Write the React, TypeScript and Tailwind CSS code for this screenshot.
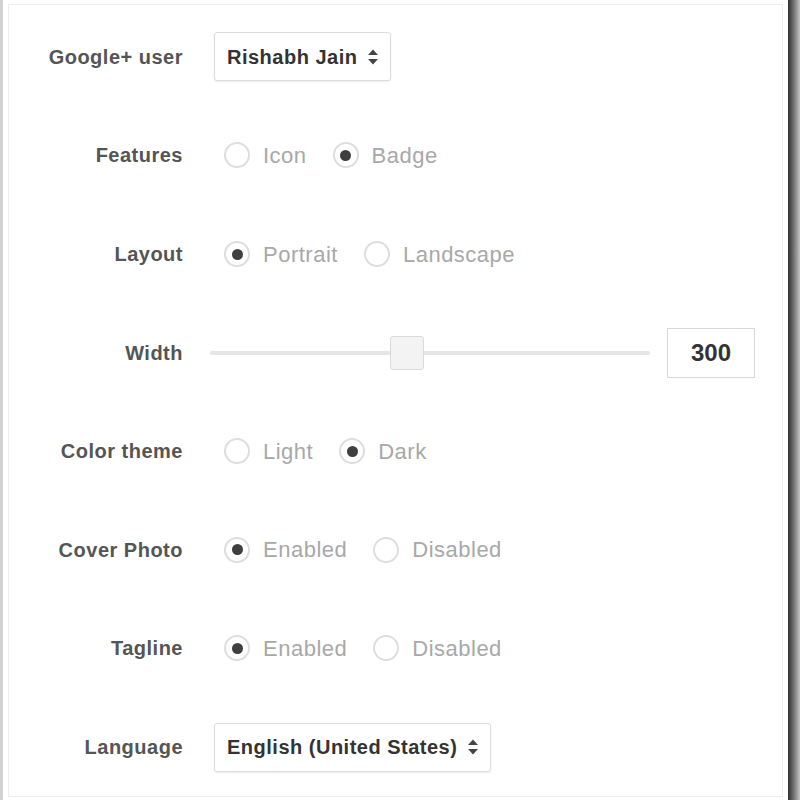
const font = { fontFamily: '"Liberation Sans", Arial, sans-serif' };

function Arrows() {
  return (
    <svg width="12" height="18" viewBox="0 0 12 18" className="ml-[10px] shrink-0">
      <path d="M1 7 L6 1.5 L11 7 Z" fill="#444" />
      <path d="M1 11 L6 16.5 L11 11 Z" fill="#444" />
    </svg>
  );
}

function Select({ value }: { value: string }) {
  return (
    <div className="flex items-center h-[49px] pl-[12px] pr-[11px] border border-[#dcdcdc] rounded-[3px] bg-white shadow-[0_1px_2px_rgba(0,0,0,0.08)]">
      <span className="text-[20px] font-bold text-[#333] tracking-[0.5px]">{value}</span>
      <Arrows />
    </div>
  );
}

function Radio({ label, checked }: { label: string; checked?: boolean }) {
  return (
    <div className="flex items-center">
      <div className="w-[26px] h-[26px] rounded-full border-2 border-[#dedede] bg-white flex items-center justify-center">
        {checked && <div className="w-[11px] h-[11px] rounded-full bg-[#3f3f3f]" />}
      </div>
      <span className="ml-[13px] text-[22px] text-[#a8a8a8] tracking-[0.5px]">{label}</span>
    </div>
  );
}

function Row({ label, children }: { label: string; children: React.ReactNode }) {
  return (
    <div className="flex items-center h-[98.6px]">
      <div className="w-[174px] text-right text-[20px] font-bold text-[#555] tracking-[0.5px] shrink-0">
        {label}
      </div>
      <div className="ml-[31px] flex items-center flex-1">{children}</div>
    </div>
  );
}

function Radios({ a, b, first }: { a: string; b: string; first: boolean }) {
  return (
    <div className="flex items-center gap-[26px] ml-[10px]">
      <Radio label={a} checked={first} />
      <Radio label={b} checked={!first} />
    </div>
  );
}

export default function App() {
  return (
    <div className="w-[800px] h-[800px] bg-white flex overflow-hidden" style={font}>
      <div className="w-[3px] h-full bg-[#d2d2d2]" />
      <div className="w-[5px]" />
      <div className="flex-1 flex flex-col">
        <div className="h-[4px]" />
        <div className="flex-1 border border-[#eeeeee] pt-[3px]">
          <Row label="Google+ user">
            <Select value="Rishabh Jain" />
          </Row>
          <Row label="Features">
            <Radios a="Icon" b="Badge" first={false} />
          </Row>
          <Row label="Layout">
            <Radios a="Portrait" b="Landscape" first={true} />
          </Row>
          <Row label="Width">
            <div className="flex items-center flex-1">
              <div className="relative w-[440px] h-[4px] bg-[#e6e6e6] rounded-full ml-[-4px]">
                <div className="absolute left-[180px] top-[-15px] w-[34px] h-[34px] rounded-[3px] border border-[#dadada] bg-[#f3f3f3]" />
              </div>
              <div className="ml-[17px] w-[88px] h-[50px] border border-[#d8d8d8] flex items-center justify-center text-[24px] text-[#333] font-bold">
                300
              </div>
            </div>
          </Row>
          <Row label="Color theme">
            <Radios a="Light" b="Dark" first={false} />
          </Row>
          <Row label="Cover Photo">
            <Radios a="Enabled" b="Disabled" first={true} />
          </Row>
          <Row label="Tagline">
            <Radios a="Enabled" b="Disabled" first={true} />
          </Row>
          <Row label="Language">
            <Select value="English (United States)" />
          </Row>
        </div>
        <div className="h-[3px]" />
      </div>
      <div className="w-[5px]" />
      <div className="w-[12px] h-full bg-linear-to-r from-[#2e2e2e] via-[#777] to-[#c4c4c4]" />
    </div>
  );
}
